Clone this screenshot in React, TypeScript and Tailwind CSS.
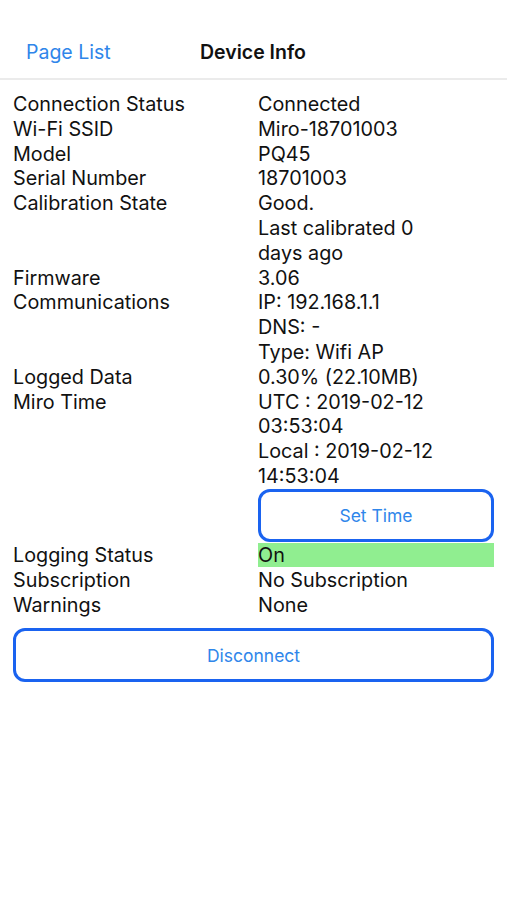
import React from "react";

const rows1: [string, string[]][] = [
  ["Connection Status", ["Connected"]],
  ["Wi-Fi SSID", ["Miro-18701003"]],
  ["Model", ["PQ45"]],
  ["Serial Number", ["18701003"]],
  ["Calibration State", ["Good.", "Last calibrated 0", "days ago"]],
  ["Firmware", ["3.06"]],
  ["Communications", ["IP: 192.168.1.1", "DNS: -", "Type: Wifi AP"]],
  ["Logged Data", ["0.30% (22.10MB)"]],
  ["Miro Time", ["UTC : 2019-02-12", "03:53:04", "Local : 2019-02-12", "14:53:04"]],
];

function Row({ label, values }: { label: string; values: string[] }) {
  return (
    <div className="flex">
      <div className="w-[245px] shrink-0">{label}</div>
      <div className="w-[236px]">
        {values.map((v, i) => (
          <div key={i}>{v}</div>
        ))}
      </div>
    </div>
  );
}

export default function App() {
  return (
    <div
      className="w-[507px] h-[900px] bg-white text-[#111] overflow-hidden"
      style={{ fontFamily: 'Inter, "Liberation Sans", Arial, sans-serif' }}
    >
      <div className="h-[80px] border-b-2 border-[#ebebeb] flex items-center pt-[28px]">
        <div className="w-[200px] pl-[26px] text-[19.5px] text-[#2f86ea]">Page List</div>
        <div className="text-[19.5px] font-semibold text-[#111]">Device Info</div>
      </div>
      <div className="pl-[13px] pt-[12px] text-[19.8px] leading-[24.8px]">
        {rows1.map(([l, v]) => (
          <Row key={l} label={l} values={v} />
        ))}
        <div className="flex">
          <div className="w-[245px] shrink-0" />
          <button className="w-[236px] h-[53px] pt-[3px] rounded-[12px] border-[3px] border-[#1a63f0] text-[#2f86ea] text-[17.5px] bg-white">
            Set Time
          </button>
        </div>
        <div className="flex mt-[1px] leading-[24px]">
          <div className="w-[245px] shrink-0">Logging Status</div>
          <div className="w-[236px] bg-[#90ee90]">On</div>
        </div>
        <div className="mt-[1px]">
          <Row label="Subscription" values={["No Subscription"]} />
          <Row label="Warnings" values={["None"]} />
        </div>
        <button className="mt-[11px] w-[481px] h-[54px] pt-[2px] rounded-[12px] border-[3px] border-[#1a63f0] text-[#2f86ea] text-[17.5px] bg-white">
          Disconnect
        </button>
      </div>
    </div>
  );
}
